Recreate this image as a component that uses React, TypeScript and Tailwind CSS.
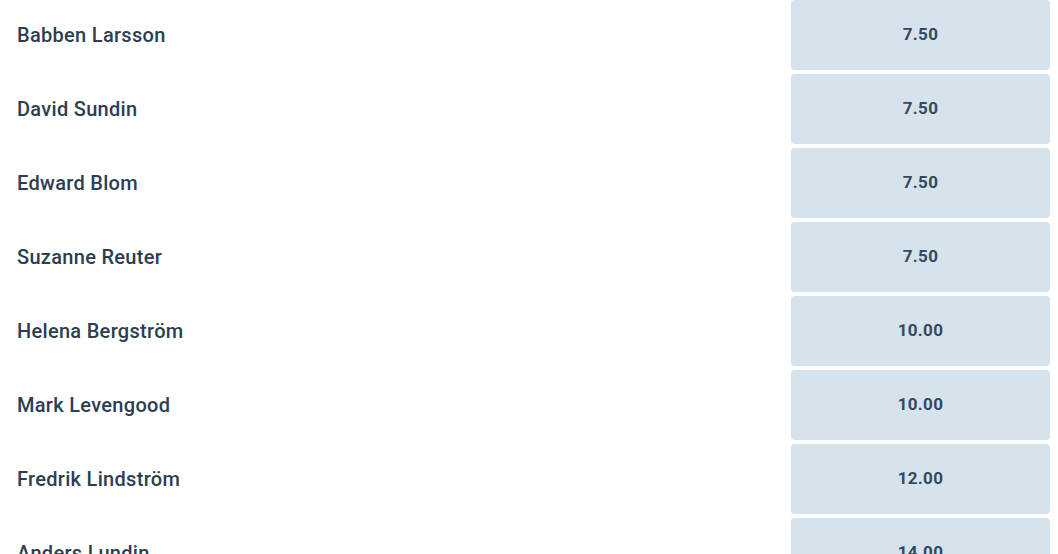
const rows = [
  { name: 'Babben Larsson', odds: '7.50' },
  { name: 'David Sundin', odds: '7.50' },
  { name: 'Edward Blom', odds: '7.50' },
  { name: 'Suzanne Reuter', odds: '7.50' },
  { name: 'Helena Bergström', odds: '10.00' },
  { name: 'Mark Levengood', odds: '10.00' },
  { name: 'Fredrik Lindström', odds: '12.00' },
  { name: 'Anders Lundin', odds: '14.00' },
]

export default function App() {
  return (
    <div className="h-[554px] w-full overflow-hidden bg-white font-['Roboto',sans-serif] text-[#2c3e50]">
      <div className="flex flex-col gap-[4px]">
        {rows.map((row) => (
          <div key={row.name} className="flex items-center">
            <span className="flex-1 pl-[17px] text-[20px] font-medium tracking-[0.3px]">{row.name}</span>
            <button className="mr-[8px] flex h-[70px] w-[259px] items-center justify-center rounded-[4px] bg-[#d6e2ec] text-[17px] font-bold tracking-[0.3px] text-[#34495e]">
              {row.odds}
            </button>
          </div>
        ))}
      </div>
    </div>
  )
}
